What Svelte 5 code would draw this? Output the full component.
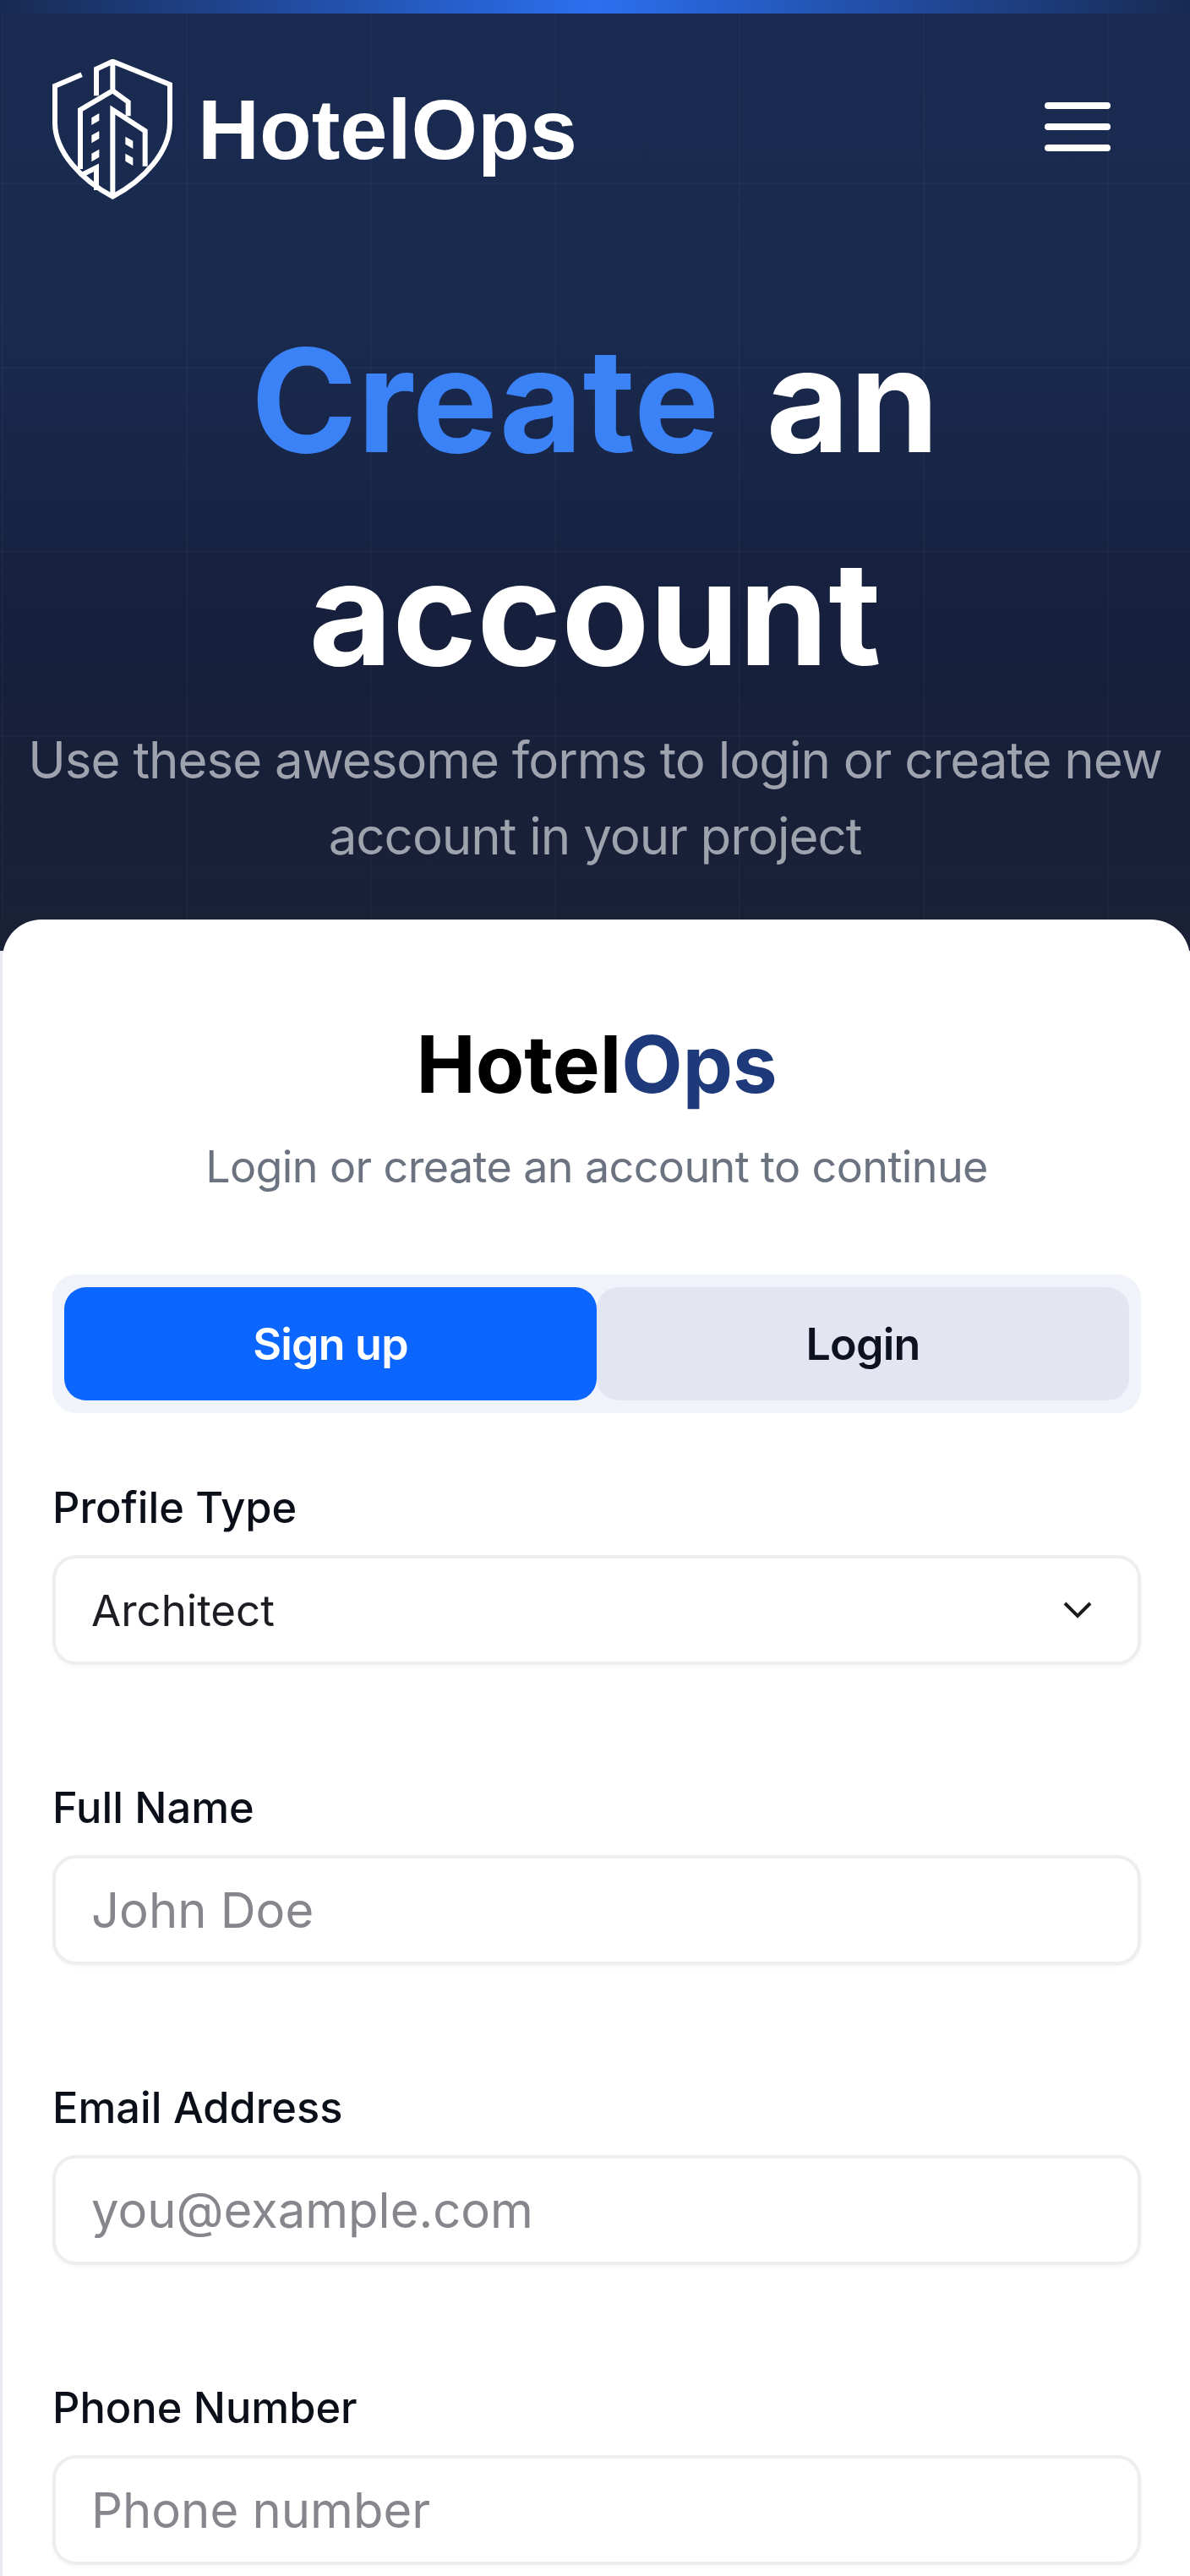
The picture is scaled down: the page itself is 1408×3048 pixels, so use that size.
<script>
    const fields = [
        { label: 'Full Name', placeholder: 'John Doe' },
        { label: 'Email Address', placeholder: 'you@example.com' },
        { label: 'Phone Number', placeholder: 'Phone number' }
    ];
</script>

<div class="page">
    <section class="hero">
        <div class="hero__accent"></div>
        <header class="nav">
            <div class="brand">
                <svg class="brand__logo" viewBox="66 60 426 498" fill="none" stroke="#fff" stroke-width="18" stroke-linejoin="miter" aria-hidden="true">
                    <path d="M170 115 75 155V285C75 390 170 490 280 548 390 490 483 390 483 285V150L280 68 222 95V190" />
                    <path d="M280 70V172L165 240V450" />
                    <path d="M280 172 335 212V262" />
                    <path d="M172 470 222 445V525" />
                    <path d="M280 548V240L395 315V440" />
                    <path d="M205 268 232 252V278L205 294ZM205 330 232 315V342L205 358ZM205 395 232 380V408L205 424Z" fill="#fff" stroke="none" />
                    <path d="M325 335 352 350V378L325 362ZM325 395 352 410V438L325 422Z" fill="#fff" stroke="none" />
                </svg>
                <span class="brand__name">HotelOps</span>
            </div>
            <button class="burger" aria-label="Menu">
                <span></span><span></span><span></span>
            </button>
        </header>
        <h1 class="hero__title"><span class="hero__word">Create</span> an account</h1>
        <p class="hero__sub">Use these awesome forms to login or create new account in your project</p>
    </section>

    <main class="card">
        <h2 class="card__title">Hotel<span>Ops</span></h2>
        <p class="card__sub">Login or create an account to continue</p>

        <div class="tabs">
            <button class="tab tab--active">Sign up</button>
            <button class="tab">Login</button>
        </div>

        <div class="field">
            <span class="field__label">Profile Type</span>
            <div class="field__box">
                <span class="field__value">Architect</span>
                <svg class="field__chevron" viewBox="0 0 34 20" fill="none" stroke="#1a1a1a" stroke-width="4" aria-hidden="true">
                    <path d="M2 2 17 17 32 2" />
                </svg>
            </div>
        </div>

        {#each fields as f}
            <div class="field">
                <span class="field__label">{f.label}</span>
                <div class="field__box">
                    <span class="field__placeholder">{f.placeholder}</span>
                </div>
            </div>
        {/each}
    </main>
</div>

<style>
    :global(body) {
        margin: 0;
        background: #fff;
    }

    .page {
        height: 3048px;
        overflow: hidden;
        background: linear-gradient(#1a2036 1125px, #e8e8ef 1125px);
        font-family: Inter, "Liberation Sans", sans-serif;
    }

    .hero {
        position: relative;
        height: 1088px;
        box-sizing: border-box;
        padding-top: 71px;
        background-color: #1a2a50;
        background-image:
            linear-gradient(rgba(255, 255, 255, 0.022) 2px, transparent 2px),
            linear-gradient(90deg, rgba(255, 255, 255, 0.022) 2px, transparent 2px),
            linear-gradient(180deg, #1a2a50 0%, #192a4f 35%, #161f3b 72%, #1a2036 100%);
        background-size: 218px 218px, 218px 218px, 100% 100%;
        background-position: 0 -2px, 2px 0, 0 0;
    }

    .hero__accent {
        position: absolute;
        inset: 0 0 auto 0;
        height: 16px;
        background: linear-gradient(90deg, #182a52 0%, #2b6ff0 50%, #182a52 100%);
    }

    .nav {
        display: flex;
        align-items: center;
        justify-content: space-between;
        padding: 0 94px 0 62px;
        height: 164px;
    }

    .brand {
        display: flex;
        align-items: center;
        gap: 30px;
    }

    .brand__logo {
        width: 142px;
        height: 166px;
    }

    .brand__name {
        font-family: "Liberation Sans", Arial, sans-serif;
        font-weight: 700;
        font-size: 101px;
        color: #fff;
    }

    .burger {
        display: flex;
        flex-direction: column;
        gap: 17px;
        width: 78px;
        margin-bottom: 6px;
        padding: 0;
        border: 0;
        background: none;
    }

    .burger span {
        height: 8px;
        border-radius: 4px;
        background: #fff;
    }

    .hero__title {
        margin: 112px auto 0;
        width: 900px;
        font-size: 170px;
        line-height: 252px;
        font-weight: 700;
        text-align: center;
        color: #fff;
    }

    .hero__word {
        color: #3b82f6;
        margin-right: 15px;
    }

    .hero__sub {
        margin: 3px 0 0;
        padding: 0 20px;
        font-size: 60px;
        line-height: 90px;
        letter-spacing: -1px;
        text-align: center;
        color: #9ea3ae;
    }

    .card {
        margin-left: 3px;
        padding: 121px 58px 0 59px;
        border-radius: 46px 46px 0 0;
        background: #fff;
        height: 1960px;
        box-sizing: border-box;
    }

    .card__title {
        margin: 0;
        font-size: 94px;
        line-height: 100px;
        font-weight: 700;
        text-align: center;
        color: #000;
    }

    .card__title span {
        color: #1e3a7b;
    }

    .card__sub {
        margin: 37px 0 0;
        font-size: 52px;
        line-height: 70px;
        letter-spacing: -0.6px;
        text-align: center;
        color: #6b7280;
    }

    .tabs {
        display: flex;
        margin-top: 92px;
        padding: 15px 14px;
        height: 164px;
        box-sizing: border-box;
        border-radius: 28px;
        background: #f1f3fa;
    }

    .tab {
        flex: 1;
        border: 0;
        border-radius: 26px;
        background: #e3e6f1;
        font: 600 52px Inter, sans-serif;
        letter-spacing: -0.8px;
        color: #0d1120;
    }

    .tab--active {
        background: #0b66ff;
        color: #fff;
    }

    .field {
        margin-top: 82px;
    }

    .field + .field {
        margin-top: 139px;
    }

    .field__label {
        display: block;
        font-size: 50.5px;
        line-height: 60px;
        font-weight: 500;
        color: #0b0f19;
    }

    .field__box {
        display: flex;
        align-items: center;
        justify-content: space-between;
        margin-top: 26px;
        height: 130px;
        box-sizing: border-box;
        padding: 0 54px 0 42px;
        border: 4px solid #eeeeee;
        border-radius: 28px;
        background: #fff;
        box-shadow: 0 2px 4px rgba(0, 0, 0, 0.04);
    }

    .field__value {
        font-size: 51px;
        color: #1c1e24;
    }

    .field__placeholder {
        font-size: 58px;
        color: #86868c;
    }

    .field__chevron {
        width: 34px;
        height: 20px;
    }
</style>
